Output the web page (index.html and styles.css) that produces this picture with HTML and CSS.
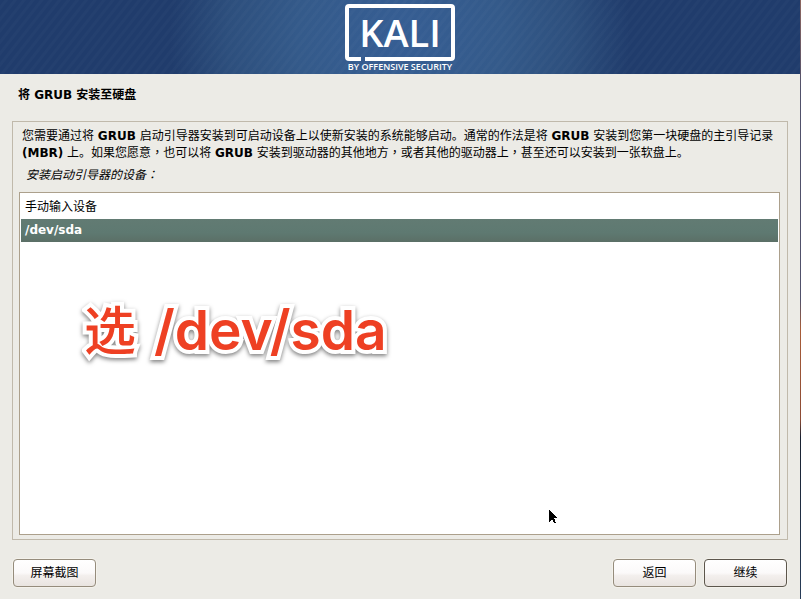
FILE: index.html
```html
<!DOCTYPE html>
<html lang="zh-CN">
<head>
<meta charset="utf-8">
<title>将 GRUB 安装至硬盘</title>
<link rel="stylesheet" href="styles.css">
</head>
<body>
<div class="installer">
  <header class="banner">
    <svg class="logo" viewBox="0 0 112 70" width="112" height="70" role="img" aria-label="KALI BY OFFENSIVE SECURITY">
      <path d="M17 56H5Q3 56 3 54V5Q3 3 5 3H107Q109 3 109 5V54Q109 56 107 56H21" fill="none" stroke="#fff" stroke-width="4"/>
      <text class="logo-name" x="56" y="44" text-anchor="middle">KALI</text>
      <text class="logo-by" x="56" y="67" text-anchor="middle">BY OFFENSIVE SECURITY</text>
    </svg>
  </header>
  <h1 class="title">将 GRUB 安装至硬盘</h1>
  <form class="form">
    <main class="panel">
      <p class="intro">您需要通过将 <b>GRUB</b> 启动引导器安装到可启动设备上以使新安装的系统能够启动。通常的作法是将 <b>GRUB</b> 安装到您第一块硬盘的主引导记录 <b>(MBR)</b> 上。如果您愿意<span class="mark" lang="zh-TW">，</span>也可以将 <b>GRUB</b> 安装到驱动器的其他地方<span class="mark" lang="zh-TW">，</span>或者其他的驱动器上<span class="mark" lang="zh-TW">，</span>甚至还可以安装到一张软盘上。</p>
      <p class="question" id="question">安装启动引导器的设备<span class="mark" lang="zh-TW">：</span></p>
      <div class="list" role="radiogroup" aria-labelledby="question">
        <label class="item"><input type="radio" name="device" value="manual"><span>手动输入设备</span></label>
        <label class="item"><input type="radio" name="device" value="sda" checked><span>/dev/sda</span></label>
        <div class="note">选 <span class="note-path">/dev/sda</span></div>
        <svg class="pointer" viewBox="0 0 9 14" width="9" height="14" aria-hidden="true"><path d="M0 0L8 8H5L7 13H5L3 9L0 12Z" fill="#000" shape-rendering="crispEdges"/></svg>
      </div>
    </main>
    <footer class="actions">
      <button type="button" class="button shot">屏幕截图</button>
      <button type="button" class="button">返回</button>
      <button type="submit" class="button default">继续</button>
    </footer>
  </form>
</div>
</body>
</html>
```

FILE: styles.css
```css
* { box-sizing: border-box; }

body {
  margin: 0;
  padding-right: 1px;
  background: linear-gradient(#8c6660, #50506a 15%, #50506a 50%, #a85c38 55%, #8c4a34 70%, #182030 73%, #283c58);
  color: #000;
  font: 12px/17px "DejaVu Sans", "Noto Sans CJK SC", sans-serif;
}

.installer {
  display: flex;
  flex-direction: column;
  min-height: 100vh;
  background: #ecebe6;
}

.banner {
  display: flex;
  justify-content: center;
  height: 74px;
  padding-top: 3px;
  background:
    repeating-linear-gradient(128deg, rgba(255, 255, 255, 0) 0 3px, rgba(255, 255, 255, 0.02) 4px 6px, rgba(255, 255, 255, 0) 7px),
    radial-gradient(circle 230px at center, #365e94 0, #345a8a 45%, #2d4f7d 75%, #203c6c 100%);
  background-color: #203c6c;
}

.logo { overflow: visible; fill: #fff; }
.logo-name { font: 600 38px "Open Sans", sans-serif; }
.logo-by { font: 600 9px "Open Sans", sans-serif; }

.title {
  margin: 0;
  padding: 13px 18px 17px;
  font-size: 12px;
  line-height: 17px;
}

.form {
  display: flex;
  flex: 1;
  flex-direction: column;
  padding: 0 12px 12px;
}

.panel {
  display: flex;
  flex: 1;
  flex-direction: column;
  padding: 6px 7px 4px 6px;
  border: 1px solid #c0b9ab;
}

.intro { margin: 0 4px 0 3px; }
.question { margin: 5px 7px 8px; font-style: italic; }
.mark { font-family: "Noto Sans CJK TC", sans-serif; line-height: 1; }

.list {
  position: relative;
  flex: 1;
  padding: 3px 1px;
  border: 1px solid #aca08c;
  background: #fff;
}

.item { display: block; height: 23px; padding: 3px 4px; }
.item input { position: absolute; opacity: 0; pointer-events: none; }
.item:has(input:checked) {
  background: linear-gradient(#627b73, #5e7971 60%, #5b6f66);
  color: #fff;
  font-weight: bold;
}

.note {
  position: absolute;
  left: 64px;
  top: 101px;
  color: #ee4023;
  font: 500 52px/72px Inter, "Noto Sans CJK SC", sans-serif;
  white-space: nowrap;
  -webkit-text-stroke: 8px #fff;
  paint-order: stroke fill;
  stroke-linejoin: round;
  filter: drop-shadow(0 2px 2px rgba(0, 0, 0, 0.5));
}

.note-path { margin-left: 4px; font-size: 55px; font-weight: 600; }

.pointer { position: absolute; left: 529px; top: 317px; }

.actions { display: flex; gap: 8px; margin: 19px 1px 0; }

.button {
  width: 83px;
  height: 28px;
  padding: 0;
  border: 1px solid #958c7c;
  border-radius: 4px;
  background: linear-gradient(#fff, #fbf9f9 50%, #f3efed 60%, #e9e4e0);
  box-shadow: 0 0 0 1px #f4f2ec;
  color: #000;
  font: inherit;
}

.shot { margin-right: auto; }
.default { border-color: #5c564c; }
```
